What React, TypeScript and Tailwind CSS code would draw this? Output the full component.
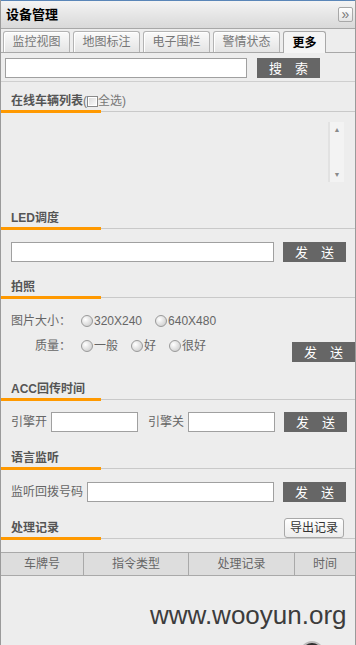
import React from "react";

const ORANGE = "border-[#ff9900]";

function SectionHeader({
  title,
  extra,
  right,
}: {
  title: string;
  extra?: React.ReactNode;
  right?: React.ReactNode;
}) {
  return (
    <div className="flex h-[31px] items-end">
      <div className={`w-[100px] shrink-0 border-b-[3px] ${ORANGE}`}>
        <div className="flex items-center whitespace-nowrap pb-px pl-[10px] text-[12px] font-bold leading-[16px] text-[#555]">
          {title}
          {extra}
        </div>
      </div>
      <div className="mb-px flex flex-1 justify-end border-b border-[#c9c9c9]">{right}</div>
    </div>
  );
}

function SendBtn({ className = "" }: { className?: string }) {
  return (
    <div
      className={`flex h-[20px] w-[63px] shrink-0 items-center justify-center bg-[#666666] text-[13px] leading-none text-white ${className}`}
    >
      发　送
    </div>
  );
}

function Input({ className = "" }: { className?: string }) {
  return <div className={`h-[20px] shrink-0 border border-[#a0a0a0] bg-white ${className}`} />;
}

function Radio() {
  return (
    <span className="inline-block h-[12px] w-[12px] shrink-0 rounded-full border border-[#9a9a9a] bg-[radial-gradient(circle_at_35%_35%,#ffffff,#c4c4c4)]" />
  );
}

function Opt({ label, last }: { label: string; last?: boolean }) {
  return (
    <div className={`flex items-center ${last ? "" : "mr-[13px]"}`}>
      <Radio />
      <span className="ml-[1px]">{label}</span>
    </div>
  );
}

const tabs = ["监控视图", "地图标注", "电子围栏", "警情状态"];

export default function App() {
  return (
    <div className="relative h-[645px] w-[356px] overflow-hidden border-x border-[#9a9a9a] bg-[#ededed] font-['Liberation_Sans','Noto_Sans_CJK_SC',sans-serif] text-[12px] text-[#666]">
      <div className="h-px bg-[#5a86b8]" />
      {/* header */}
      <div className="flex h-[28px] items-center border-b border-[#a8a8a8] bg-gradient-to-b from-[#f4f4f4] via-[#e6e6e6] to-[#d9d9d9] pl-[5px]">
        <span className="text-[13px] font-bold text-black">设备管理</span>
        <div className="ml-auto mr-[2px] flex h-[15px] w-[15px] items-center justify-center rounded-[2px] border border-[#a8a8a8] bg-gradient-to-b from-white to-[#e4e4e4] pb-[2px] text-[14px] leading-none text-[#777]">
          »
        </div>
      </div>
      {/* tabs */}
      <div className="flex h-[24px] items-end gap-[3px] border-b border-[#a8a8a8] pl-[2px]">
        {tabs.map((t) => (
          <div
            key={t}
            className="flex h-[21px] w-[67px] items-center justify-center rounded-t-[3px] border border-b-0 border-[#b3b3b3] bg-gradient-to-b from-[#fafafa] to-[#e4e4e4] text-[12px] text-[#777] shadow-[inset_1px_1px_0_#ffffff]"
          >
            {t}
          </div>
        ))}
        <div className="-mb-px flex h-[22px] w-[43px] items-center justify-center rounded-t-[3px] border border-b-0 border-[#a8a8a8] bg-[#f5f5f5] text-[12px] font-bold text-black">
          更多
        </div>
      </div>
      {/* search */}
      <div className="flex h-[29px] items-start border-b border-[#cfcfcf] pl-[4px] pt-[5px]">
        <Input className="w-[242px]" />
        <div className="ml-[10px] flex h-[20px] w-[63px] items-center justify-center bg-[#666666] text-[13px] leading-none text-white">
          搜　索
        </div>
      </div>

      <SectionHeader
        title="在线车辆列表"
        extra={
          <span className="flex items-center font-normal text-[#777]">
            (
            <span className="inline-block h-[11px] w-[11px] border border-[#8a8a8a] bg-gradient-to-br from-[#d8d8d8] to-white shadow-[inset_0_0_0_1px_#ffffff]" />
            全选)
          </span>
        }
      />
      <div className="flex h-[86px] justify-end pr-[11px] pt-[9px]">
        <div className="flex h-[60px] w-[16px] flex-col items-center justify-between border-l-2 border-[#e2e2e2] bg-[#f3f3f3] py-[4px] text-[7px] leading-none text-[#8a8a8a]">
          <span>▲</span>
          <span>▼</span>
        </div>
      </div>

      <SectionHeader title="LED调度" />
      <div className="mt-[12px] flex items-center pl-[10px]">
        <Input className="w-[263px]" />
        <SendBtn className="ml-[9px]" />
      </div>

      <div className="mt-[6px]">
        <SectionHeader title="拍照" />
      </div>
      <div className="mt-[12px] flex h-[20px] items-center pl-[10px]">
        <div className="w-[60px] text-right">图片大小：</div>
        <div className="ml-[10px] flex items-center">
          <Opt label="320X240" />
          <Opt label="640X480" last />
        </div>
      </div>
      <div className="mt-[5px] flex items-start pl-[10px]">
        <div className="flex h-[20px] items-center">
          <div className="w-[60px] text-right">质量：</div>
          <div className="ml-[10px] flex items-center">
            <Opt label="一般" />
            <Opt label="好" />
            <Opt label="很好" last />
          </div>
        </div>
        <SendBtn className="ml-auto mt-[6px]" />
      </div>

      <div className="mt-[8px]">
        <SectionHeader title="ACC回传时间" />
      </div>
      <div className="mt-[11px] flex items-center pl-[10px]">
        <span>引擎开</span>
        <Input className="ml-[4px] w-[87px]" />
        <span className="ml-[10px]">引擎关</span>
        <Input className="ml-[4px] w-[87px]" />
        <SendBtn className="ml-[9px]" />
      </div>

      <div className="mt-[7px]">
        <SectionHeader title="语言监听" />
      </div>
      <div className="mt-[12px] flex items-center pl-[10px]">
        <span>监听回拨号码</span>
        <Input className="ml-[4px] w-[187px]" />
        <SendBtn className="ml-[9px]" />
      </div>

      <div className="mt-[7px]">
        <SectionHeader
          title="处理记录"
          right={
            <div className="mr-[11px] flex h-[20px] w-[60px] items-center justify-center rounded-[3px] border border-[#a8a8a8] bg-gradient-to-b from-white to-[#ececec] text-[12px] text-[#333]">
              导出记录
            </div>
          }
        />
      </div>

      <div className="mt-[12px] grid h-[24px] grid-cols-[83px_105px_106px_1fr] border-y border-[#a9a9a9] bg-[#dddddd] text-[12px] text-[#666]">
        <div className="flex items-center justify-center border-r border-[#a9a9a9]">车牌号</div>
        <div className="flex items-center justify-center border-r border-[#a9a9a9]">指令类型</div>
        <div className="flex items-center justify-center border-r border-[#a9a9a9]">处理记录</div>
        <div className="flex items-center justify-center">时间</div>
      </div>

      <div className="pointer-events-none absolute left-[149px] top-[602px] font-['Liberation_Sans',sans-serif] text-[26px] leading-[26px] text-[#3c3c3c]">
        www.wooyun.org
      </div>
      <div className="absolute left-[299px] top-[641px] h-[24px] w-[24px] rounded-full border-2 border-[#bdbdbd] bg-[#2e2e2e]" />
    </div>
  );
}
